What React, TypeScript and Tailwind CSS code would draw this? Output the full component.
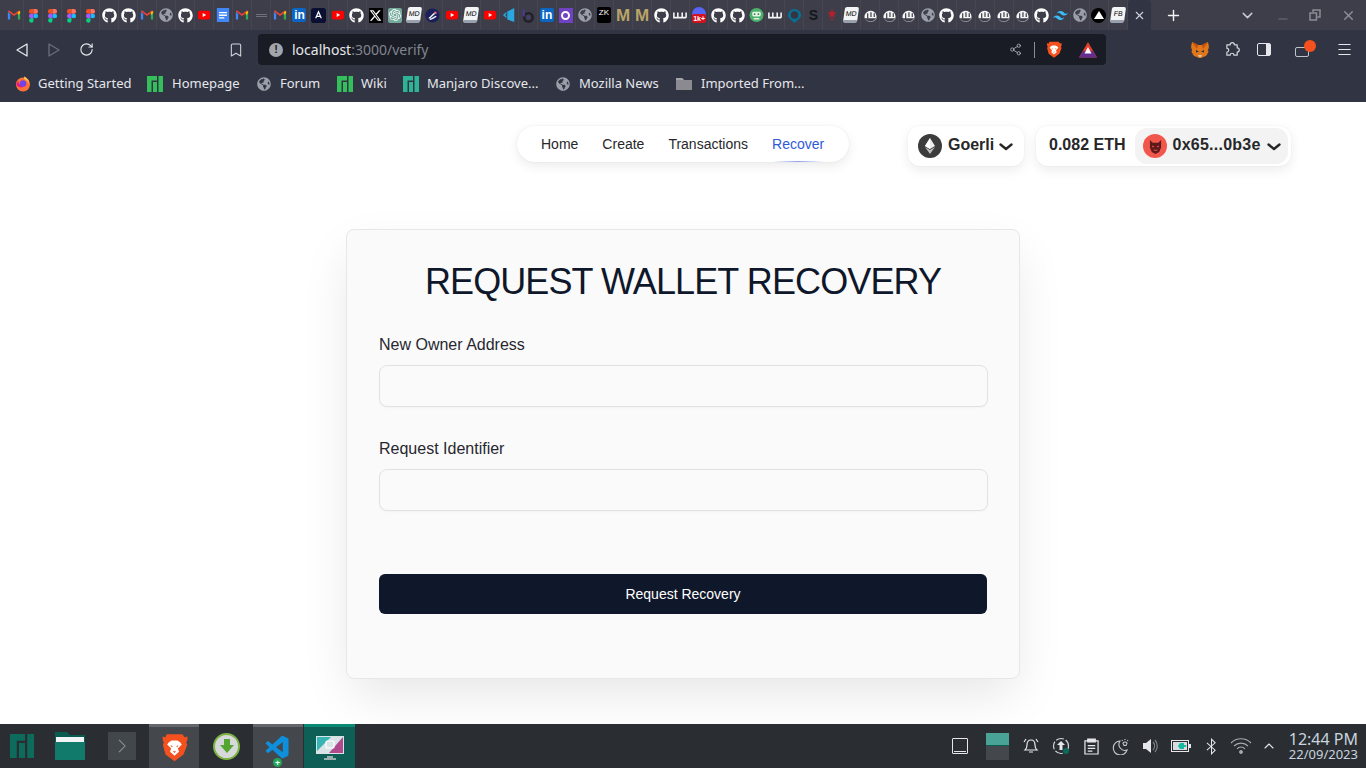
import React from "react";
import { Bookmark, ChevronDown, ChevronUp, Menu, Minus, Plus, RotateCw, Share2, X } from "lucide-react";
import { FaGithub, FaGlobeAmericas } from "react-icons/fa";
import { FaXTwitter } from "react-icons/fa6";
import { SiOpenai, SiTailwindcss } from "react-icons/si";
import { VscVscode } from "react-icons/vsc";

const UI_FONT = "font-['Noto_Sans',sans-serif]";
const PAGE_FONT = "font-['Liberation_Sans',Arial,sans-serif]";

const GmailIcon = () => (
  <svg viewBox="0 0 16 16" className="h-[14px] w-[14px]">
    <path d="M1 4v9h2.6V7z" fill="#4285f4" />
    <path d="M15 4v9h-2.6V7z" fill="#34a853" />
    <path d="M1 4l7 5.2L15 4l-1.2-1.4L8 6.8 2.2 2.6z" fill="#ea4335" />
    <path d="M12.4 4.5L15 3.5V6l-2.6 2z" fill="#fbbc04" />
  </svg>
);

const FigmaIcon = () => (
  <svg viewBox="0 0 12 16" className="h-[15px] w-[11px]">
    <path d="M6 1H3.5a2.4 2.4 0 000 5H6z" fill="#f24e1e" />
    <path d="M6 1h2.5a2.4 2.4 0 010 5H6z" fill="#ff7262" />
    <path d="M6 6H3.5a2.4 2.4 0 000 5H6z" fill="#a259ff" />
    <circle cx="8.5" cy="8.5" r="2.5" fill="#1abcfe" />
    <path d="M6 11H3.5A2.4 2.4 0 106 13.4z" fill="#0acf83" />
  </svg>
);

const YoutubeIcon = () => (
  <svg viewBox="0 0 16 16" className="h-[14px] w-[14px]">
    <rect x="1" y="3" width="14" height="10" rx="2.5" fill="#f00" />
    <path d="M6.5 5.8v4.4L10.5 8z" fill="#fff" />
  </svg>
);

const DocsIcon = () => (
  <svg viewBox="0 0 16 16" className="h-[16px] w-[14px]">
    <rect x="1" y="0" width="14" height="16" fill="#4285f4" />
    <path d="M3.5 4.5h9v1.5h-9zM3.5 7.5h9V9h-9zM3.5 10.5h6V12h-6z" fill="#fff" />
  </svg>
);

const LinkedinIcon = () => (
  <span className={`flex h-[14px] w-[14px] items-center justify-center rounded-[2px] bg-[#0a66c2] text-[12px] font-bold leading-none text-white ${PAGE_FONT}`}>in</span>
);

const MdIcon = ({ label }: { label: string }) => (
  <span className={`flex h-[16px] w-[14px] skew-x-[-8deg] items-center justify-center rounded-[2px] border-b-[3px] border-b-gray-400 bg-[#f3f4f6] text-[7px] leading-none text-black ${PAGE_FONT}`}>{label}</span>
);

const MarketIcon = () => (
  <svg viewBox="0 0 16 16" className="h-[16px] w-[15px]">
    <path d="M1.500 10.500A6.500 6.500 0 1114.500 9.500L14 11.500 2 11.500z" fill="#f5f5f5" />
    <path d="M5 6v6M8.500 5v5M12 6v4" stroke="#3d3e49" strokeWidth="1.300" fill="none" />
    <path d="M2 11.500c1.500 2 3.500 3 6 3 3 0 5.500-1.500 6.500-5L15 10c-.5 3.500-3.500 5.500-7 5.500-3 0-5-1.500-6-4z" fill="#8a8b92" />
  </svg>
);

const TinyBars = () => (
  <svg viewBox="0 0 16 16" className="h-[14px] w-[14px]">
    <path d="M1 5v6h14M5.500 5v6M10.500 5v6M15 5v6" stroke="#f3f4f6" strokeWidth="1.800" fill="none" />
  </svg>
);

const BraveIcon = ({ size }: { size: number }) => (
  <svg viewBox="0 0 24 26" width={size} height={size * 1.1}>
    <path d="M5 1h14l2 2.500 2.500-.500v3l-1 2 .8 2.500L20 19l-8 6-8-6-2.300-8.500L2.500 8l-1-2V3L4 3.500z" fill="#f4511e" />
    <path d="M7 8l2.500-1.500h5L17 8l1.500 2-3.500 3.500 1 3-4 3.500-4-3.500 1-3L5.500 10z" fill="#fff" />
    <path d="M8.500 10.500l2 1-1 1zM15.500 10.500l-2 1 1 1zM10.500 16h3l-1.500 1.500z" fill="#f4511e" />
  </svg>
);

const ManjaroGlyph = ({ color, size }: { color: string; size: number }) => (
  <svg viewBox="0 0 16 16" width={size} height={size}>
    <path d="M0 0h10v4.500H4.500V16H0zM6 6h4v10H6zM11.500 0H16v16h-4.500z" fill={color} />
  </svg>
);

const GlobeMark = ({ size }: { size: number }) => <FaGlobeAmericas size={size} color="#9a9ea8" />;

const TabIcon = ({ kind }: { kind: string }) => {
  switch (kind) {
    case "gmail": return <GmailIcon />;
    case "figma": return <FigmaIcon />;
    case "gh": return <FaGithub size={15} color="#fff" />;
    case "globe": return <GlobeMark size={14} />;
    case "yt": return <YoutubeIcon />;
    case "docs": return <DocsIcon />;
    case "dash": return <span className="h-[3px] w-[11px] border-y border-y-[#6f7078]" />;
    case "in": return <LinkedinIcon />;
    case "anchor":
      return (
        <svg viewBox="0 0 16 16" className="h-[15px] w-[15px]">
          <rect x="0" y="0" width="16" height="16" rx="3" fill="#0b1033" />
          <path d="M5 11l3-7 3 7M6.500 9h3" stroke="#fff" strokeWidth="1.300" fill="none" />
        </svg>
      );
    case "x":
      return <span className="flex h-[15px] w-[14px] items-center justify-center bg-black"><FaXTwitter size={13} color="#fff" /></span>;
    case "gpt":
      return <span className="flex h-[15px] w-[14px] items-center justify-center rounded-[2px] bg-[#74aa9c]"><SiOpenai size={12} color="#fff" /></span>;
    case "md": return <MdIcon label="MD" />;
    case "fb": return <MdIcon label="FB" />;
    case "swirl":
      return (
        <svg viewBox="0 0 16 16" className="h-[15px] w-[15px]">
          <circle cx="8" cy="8" r="7.500" fill="#1a1f5c" />
          <path d="M4 10.500C7 11 7 6 12 5M5 12c3 0 4-2 7-3" stroke="#f4f4f5" strokeWidth="1.500" fill="none" />
          <circle cx="11" cy="5" r="1.300" fill="#e85d75" />
        </svg>
      );
    case "blue":
      return (
        <svg viewBox="0 0 16 16" className="h-[16px] w-[14px]">
          <path d="M1 8l4-3.500v2L3.500 8 5 9.500v2zM6 4l8-4v16l-8-3zM7.500 6l5-2.500v2.500l-3 1 3 2v3l-5-3z" fill="#29a8e0" />
        </svg>
      );
    case "b":
      return (
        <svg viewBox="0 0 16 16" className="h-[15px] w-[15px]">
          <circle cx="9" cy="10" r="4.500" fill="none" stroke="#1f1f28" strokeWidth="2.500" />
          <path d="M4 1v8" stroke="#4a3a85" strokeWidth="2.500" />
          <circle cx="9" cy="10" r="1.500" fill="#4a3a85" />
        </svg>
      );
    case "purple":
      return (
        <span className="flex h-[15px] w-[14px] items-center justify-center bg-[#6f42c1]">
          <span className="h-[9px] w-[9px] rounded-full border-[2px] border-white" />
        </span>
      );
    case "zk":
      return <span className={`flex h-[16px] w-[14px] items-start justify-center rounded-[2px] bg-black pt-[1px] text-[8px] leading-[10px] text-white ${PAGE_FONT}`}>ZK</span>;
    case "m":
      return <span className={`text-[17px] font-bold leading-none text-[#b9a468] ${PAGE_FONT}`}>M</span>;
    case "ll": return <TinyBars />;
    case "1k":
      return (
        <span className="relative flex h-[16px] w-[14px] flex-col items-center">
          <span className="h-[8px] w-[14px] rounded-t-full bg-[#5865f2]" />
          <span className={`absolute bottom-0 flex h-[9px] w-[14px] items-center justify-center rounded-[2px] bg-[#d3121f] text-[7px] font-bold leading-none text-white ${PAGE_FONT}`}>1k+</span>
        </span>
      );
    case "robot":
      return (
        <svg viewBox="0 0 16 16" className="h-[16px] w-[15px]">
          <circle cx="8" cy="8" r="7.500" fill="#4caf6a" />
          <rect x="3.500" y="4.500" width="9" height="5" rx="1.500" fill="#e8f5e9" />
          <circle cx="6" cy="7" r="1" fill="#2e7d32" />
          <circle cx="10" cy="7" r="1" fill="#2e7d32" />
          <path d="M5 12h6" stroke="#e8f5e9" strokeWidth="1.500" />
        </svg>
      );
    case "headset":
      return (
        <svg viewBox="0 0 16 16" className="h-[15px] w-[15px]">
          <path d="M1 8a7 7 0 0114 0c0 3-4 5-7 8-3-3-7-5-7-8z" fill="#0b6c94" />
          <circle cx="8" cy="7.500" r="4" fill="#34353f" />
        </svg>
      );
    case "s":
      return <span className={`text-[14px] font-bold leading-none text-[#15161a] ${PAGE_FONT}`}>S</span>;
    case "red":
      return (
        <svg viewBox="0 0 16 16" className="h-[14px] w-[14px]">
          <path d="M8 1l1.500 3.500L13 5l-2.500 2.500L11 11 8 9.500 5 11l.5-3.500L3 5l3.500-.5zM6.500 12h3L8 15z" fill="#b3202c" />
        </svg>
      );
    case "mm": return <MarketIcon />;
    case "tw": return <SiTailwindcss size={15} color="#38bdf8" />;
    case "black":
      return (
        <span className="flex h-[15px] w-[15px] items-center justify-center rounded-full bg-black">
          <span className="h-0 w-0 border-x-[5px] border-b-[8px] border-x-transparent border-b-white" />
        </span>
      );
    default: return null;
  }
};

const TABS = [
  "gmail", "figma", "figma", "figma", "figma", "gh", "gh", "gmail", "globe", "gh",
  "yt", "docs", "gmail", "dash", "gmail", "in", "anchor", "yt", "gh", "x",
  "gpt", "md", "swirl", "yt", "md", "yt", "blue", "b", "in", "purple",
  "globe", "zk", "m", "m", "gh", "ll", "1k", "gh", "gh", "robot",
  "ll", "headset", "s", "red", "md", "mm", "mm", "mm", "globe", "gh",
  "mm", "mm", "mm", "mm", "gh", "tw", "globe", "black", "fb",
];

const TabBar = () => (
  <div className="flex h-[30px] shrink-0 items-stretch bg-[#3d3e49] pl-[5px]">
    <div className="flex w-[1123px] shrink-0">
      {TABS.map((kind, i) => (
        <div key={i} className="flex min-w-0 flex-1 items-center justify-center border-r border-r-[#45464f]">
          <TabIcon kind={kind} />
        </div>
      ))}
    </div>
    <div className="flex w-[23px] shrink-0 items-center justify-center rounded-t-[4px] bg-[#313443]">
      <X size={13} color="#d1d5db" strokeWidth={2} />
    </div>
    <div className="flex w-[44px] shrink-0 items-center justify-center">
      <Plus size={17} color="#f3f4f6" strokeWidth={2} />
    </div>
    <div className="ml-[40px] flex w-[24px] items-center justify-center">
      <ChevronDown size={17} color="#c9cbd2" strokeWidth={2} />
    </div>
    <div className="ml-[12px] flex w-[24px] items-center justify-center pt-[8px]">
      <Minus size={14} color="#6f7079" strokeWidth={2} />
    </div>
    <div className="ml-[8px] flex w-[24px] items-center justify-center">
      <svg viewBox="0 0 12 12" className="h-[12px] w-[12px]" fill="none" stroke="#8b8c94" strokeWidth="1.500">
        <path d="M4 3V1h7v7H8.500M1 4h6.500v7H1z" />
      </svg>
    </div>
    <div className="ml-[9px] flex w-[24px] items-center justify-center">
      <X size={15} color="#8b8c94" strokeWidth={2.4} />
    </div>
  </div>
);

const ToolSlot = ({ children, className = "" }: { children: React.ReactNode; className?: string }) => (
  <div className={`flex w-[32px] items-center justify-center ${className}`}>{children}</div>
);

const TriangleIcon = ({ dir, color }: { dir: "left" | "right"; color: string }) => (
  <svg viewBox="0 0 12 14" className="h-[14px] w-[12px]" fill="none" stroke={color} strokeWidth="1.300" strokeLinejoin="round">
    <path d={dir === "left" ? "M11 1v12L1 7z" : "M1 1v12l10-6z"} />
  </svg>
);

const FoxIcon = () => (
  <svg viewBox="0 0 18 16" className="h-[16px] w-[18px]">
    <path d="M1 0l6 3h4l6-3 1 5-1 3 .5 2-2.500 4-3 1-1.500 1h-3L6 15l-3-1-2.500-4L1 8 0 5z" fill="#e2761b" />
    <path d="M5 8l3 1.500-3 1zM13 8l-3 1.500 3 1z" fill="#233447" />
    <path d="M7 13h4l-1 2H8z" fill="#d7c1b3" />
    <path d="M1 0l6 3-1 4zM17 0l-6 3 1 4z" fill="#c0530f" />
  </svg>
);

const Toolbar = () => (
  <div className="flex h-[36px] shrink-0 items-stretch bg-[#313443] pb-[1px] pl-[6px] pt-[4px]">
    <ToolSlot><TriangleIcon dir="left" color="#e5e7eb" /></ToolSlot>
    <ToolSlot><TriangleIcon dir="right" color="#6b6e7a" /></ToolSlot>
    <ToolSlot><RotateCw size={15} color="#e5e7eb" strokeWidth={1.800} /></ToolSlot>
    <ToolSlot className="ml-[118px]"><Bookmark size={16} color="#d1d5db" strokeWidth={1.600} /></ToolSlot>
    <div className="ml-[6px] flex w-[848px] items-center rounded-[4px] bg-[#191c24] pl-[11px]">
      <span className={`flex h-[14px] w-[14px] items-center justify-center rounded-full bg-[#a3a5ad] text-[11px] font-bold leading-none text-[#191c24] ${PAGE_FONT}`}>!</span>
      <span className={`ml-[9px] text-[14px] text-[#e5e7eb] ${UI_FONT}`}>
        localhost<span className="text-[#82858e]">:3000/verify</span>
      </span>
      <div className="ml-auto flex items-center">
        <Share2 size={13} color="#b6b8bf" strokeWidth={1.500} />
        <span className="ml-[12px] h-[16px] w-px bg-[#8b8d95]" />
        <div className="ml-[11px]"><BraveIcon size={16} /></div>
        <svg viewBox="0 0 18 16" className="ml-[17px] mr-[9px] h-[16px] w-[18px]">
          <path d="M9 0l9 15.500H0z" fill="#e0402c" />
          <path d="M0 15.500L4 9h10l4 6.500z" fill="#662d91" />
          <path d="M9 5l3.500 6.500h-7z" fill="#fff" />
        </svg>
      </div>
    </div>
    <div className="ml-[78px] flex">
      <ToolSlot><FoxIcon /></ToolSlot>
      <ToolSlot>
        <svg viewBox="0 0 16 16" className="h-[15px] w-[15px]" fill="none" stroke="#d1d5db" strokeWidth="1.300" strokeLinejoin="round">
          <path d="M5.500 3a2.200 2.200 0 014.500 0h3v3.300a2.200 2.200 0 010 4.400V14H9.500a2 2 0 00-4 0H2v-3.300a2 2 0 000-4V3z" />
        </svg>
      </ToolSlot>
      <ToolSlot>
        <span className="flex h-[13px] w-[14px] justify-end rounded-[2px] border border-[#e5e7eb]">
          <span className="h-full w-[4px] bg-[#e5e7eb]" />
        </span>
      </ToolSlot>
      <ToolSlot className="ml-[6px]">
        <div className="relative flex h-full items-center">
          <span className="mt-[4px] h-[10px] w-[14px] rounded-[2px] border border-[#c0c2c9]" />
          <span className="absolute -right-[7px] top-[6px] h-[12px] w-[12px] rounded-full bg-[#f4511e]" />
        </div>
      </ToolSlot>
      <ToolSlot className="ml-[10px]"><Menu size={17} color="#e5e7eb" strokeWidth={1.500} /></ToolSlot>
    </div>
  </div>
);

const BookmarkItem = ({ icon, label, gap, width }: { icon: React.ReactNode; label: string; gap: string; width: string }) => (
  <div className={`flex items-center ${width} ${gap}`}>
    <span className="flex w-[16px] shrink-0 items-center justify-center">{icon}</span>
    <span className={`whitespace-nowrap text-[13px] text-[#e5e7eb] ${UI_FONT}`}>{label}</span>
  </div>
);

const FirefoxIcon = () => (
  <svg viewBox="0 0 16 16" className="h-[16px] w-[16px]">
    <circle cx="8" cy="8.500" r="7" fill="#ff7139" />
    <path d="M1.500 9a6.500 6.500 0 0011-1.500C11 12 6 11 5 8 3.500 8 3 6 4 5 2.500 5.500 1.500 7 1.500 9z" fill="#e31587" />
    <circle cx="8" cy="7.500" r="3.300" fill="#7542e5" />
    <path d="M9 .500c3 1 5.500 4 5 7.500-1-3-3-4-5-5z" fill="#ffbd4f" />
  </svg>
);

const BookmarkBar = () => (
  <div className="flex h-[36px] shrink-0 items-center bg-[#313443] pl-[15px]">
    <BookmarkItem icon={<FirefoxIcon />} label="Getting Started" gap="gap-[7px]" width="w-[132px]" />
    <BookmarkItem icon={<ManjaroGlyph color="#35bf5c" size={16} />} label="Homepage" gap="gap-[9px]" width="w-[109px]" />
    <BookmarkItem icon={<GlobeMark size={14} />} label="Forum" gap="gap-[8px]" width="w-[81px]" />
    <BookmarkItem icon={<ManjaroGlyph color="#35bf5c" size={16} />} label="Wiki" gap="gap-[8px]" width="w-[66px]" />
    <BookmarkItem icon={<ManjaroGlyph color="#2eb398" size={16} />} label="Manjaro Discove..." gap="gap-[8px]" width="w-[152px]" />
    <BookmarkItem icon={<GlobeMark size={14} />} label="Mozilla News" gap="gap-[8px]" width="w-[121px]" />
    <BookmarkItem
      icon={
        <svg viewBox="0 0 18 14" className="h-[14px] w-[18px] shrink-0">
          <path d="M1 1h6l2 2h8v10H1z" fill="#8a8a90" />
          <path d="M1 1h6l2 2H1z" fill="#a3a3a8" />
        </svg>
      }
      label="Imported From..."
      gap="gap-[9px]"
      width="w-[120px]"
    />
  </div>
);

const NavBar = () => (
  <nav className={`flex h-[36px] w-[332px] items-center gap-6 rounded-full bg-white px-6 text-sm text-[#27272a] shadow-[0_4px_12px_rgba(0,0,0,0.08),0_0_2px_rgba(0,0,0,0.08)] ${PAGE_FONT}`}>
    <a>Home</a>
    <a>Create</a>
    <a>Transactions</a>
    <a className="relative flex h-full items-center text-[#2f5bdb]">
      Recover
      <span className="absolute bottom-0 left-0 h-px w-full bg-[linear-gradient(90deg,#ffffff,#8fa3ea,#ffffff)]" />
    </a>
  </nav>
);

const WalletChevron = () => (
  <svg viewBox="0 0 14 8" className="h-[8px] w-[14px] shrink-0" fill="none" stroke="#27272a" strokeWidth="2.400" strokeLinecap="round" strokeLinejoin="round">
    <path d="M1.500 1.500L7 6l5.500-4.500" />
  </svg>
);

const EthBadge = () => (
  <span className="flex h-[24px] w-[24px] items-center justify-center rounded-full bg-[#3c3c3d]">
    <svg viewBox="0 0 10 16" className="h-[16px] w-[10px]">
      <path d="M5 0l5 8-5 3-5-3z" fill="#ececec" />
      <path d="M5 12l5-3-5 7-5-7z" fill="#bdbdbd" />
      <path d="M5 0v11L0 8z" fill="#fff" />
    </svg>
  </span>
);

const Avatar = () => (
  <span className="flex h-[24px] w-[24px] items-center justify-center rounded-full bg-[#f2574d]">
    <svg viewBox="0 0 14 16" className="h-[15px] w-[13px]">
      <path d="M1 1l3 3h6l3-3v8l-2 5-4 2-4-2-2-5z" fill="#5d1a1a" />
      <path d="M3 7l3 1-2 1zM11 7L8 8l2 1z" fill="#f2574d" />
      <path d="M5 12h4" stroke="#f2574d" strokeWidth="1" />
    </svg>
  </span>
);

const WalletHeader = () => (
  <header className={`flex shrink-0 items-start pl-[517px] pt-[24px] text-[#27272a] ${PAGE_FONT}`}>
    <NavBar />
    <div className="ml-[59px] flex h-[40px] w-[116px] items-center rounded-xl bg-white pl-[10px] shadow-[0_4px_12px_rgba(0,0,0,0.08),0_0_2px_rgba(0,0,0,0.06)]">
      <EthBadge />
      <span className="mb-[2px] ml-[6px] text-base font-bold">Goerli</span>
      <div className="ml-[5px] mt-[1px]"><WalletChevron /></div>
    </div>
    <div className="ml-[12px] flex h-[40px] w-[255px] items-center rounded-xl bg-white pl-[13px] shadow-[0_4px_12px_rgba(0,0,0,0.08),0_0_2px_rgba(0,0,0,0.06)]">
      <span className="mb-[2px] text-base font-bold">0.082 ETH</span>
      <div className="ml-[10px] flex h-[36px] w-[153px] items-center rounded-xl bg-[#f3f3f3] pl-[8px]">
        <Avatar />
        <span className="mb-[2px] ml-[5px] text-base font-bold tracking-[0.25px]">0x65...0b3e</span>
        <div className="ml-[6px] mt-[1px]"><WalletChevron /></div>
      </div>
    </div>
  </header>
);

const FormField = ({ label, className }: { label: string; className: string }) => (
  <div className={className}>
    <label className="block text-base leading-6 text-[#27272f]">{label}</label>
    <input className="mt-[8px] block h-[42px] w-[609px] rounded-lg border border-[#e2e2e4] bg-[#fafafa] shadow-[0_1px_2px_rgba(0,0,0,0.03)]" type="text" />
  </div>
);

const RecoveryCard = () => (
  <main className={`flex justify-center pt-[63px] ${PAGE_FONT}`}>
    <div className="h-[450px] w-[674px] rounded-lg border border-[#e5e7eb] bg-[#fafafa] px-8 pt-8 shadow-[0_20px_50px_-5px_rgba(0,0,0,0.1)]">
      <h1 className="text-center text-4xl tracking-tight text-[#0f172a]">REQUEST WALLET RECOVERY</h1>
      <FormField label="New Owner Address" className="mt-[31px]" />
      <FormField label="Request Identifier" className="mt-[30px]" />
      <button className="mt-[63px] block h-[40px] w-[608px] rounded-md bg-[#0f172a] text-sm text-white">Request Recovery</button>
    </div>
  </main>
);

const TaskTile = ({ children, className }: { children: React.ReactNode; className: string }) => (
  <div className={`flex h-full items-center justify-center border-t-[3px] ${className}`}>{children}</div>
);

const TrayIcon = ({ children }: { children: React.ReactNode }) => (
  <div className="flex w-[30px] items-center justify-center">{children}</div>
);

const Taskbar = () => (
  <div className={`flex h-[44px] shrink-0 items-center bg-[#2a2e32] ${UI_FONT}`}>
    <div className="ml-[10px] flex h-full items-center">
      <ManjaroGlyph color="#0c6b5b" size={24} />
    </div>
    <div className="ml-[21px] flex h-full items-center">
      <svg viewBox="0 0 30 28" className="h-[28px] w-[30px]">
        <path d="M0 0h12l3 3h15v25H0z" fill="#0a5c50" />
        <rect x="1" y="5" width="28" height="5" fill="#f3f4f6" />
        <path d="M0 10h30v18H0z" fill="#127a6a" />
      </svg>
    </div>
    <div className="ml-[23px] flex h-full items-center">
      <span className="flex h-[28px] w-[28px] items-center justify-center bg-[#42474b]">
        <svg viewBox="0 0 10 16" className="h-[14px] w-[9px]" fill="none" stroke="#8f9497" strokeWidth="1.200"><path d="M1 1l7 7-7 7" /></svg>
      </span>
    </div>
    <TaskTile className="ml-[13px] w-[50px] border-t-[#63676b] bg-[#44484d]"><BraveIcon size={27} /></TaskTile>
    <div className="ml-[14px] flex h-full items-center">
      <span className="flex h-[27px] w-[27px] items-center justify-center rounded-full border-[2px] border-[#7cb342] bg-[#d6d8da]">
        <svg viewBox="0 0 14 14" className="h-[14px] w-[14px]"><path d="M4 0h6v6h4l-7 8-7-8h4z" fill="#55a630" /></svg>
      </span>
    </div>
    <TaskTile className="relative ml-[13px] w-[50px] border-t-[#63676b] bg-[#44484d]">
      <VscVscode size={28} color="#0e8fdc" />
      <span className="absolute bottom-[1px] left-[20px] flex h-[9px] w-[9px] items-center justify-center rounded-full bg-[#22a559] text-[9px] font-bold leading-none text-white">+</span>
    </TaskTile>
    <TaskTile className="ml-[1px] w-[51px] border-t-[#0a8a74] bg-[#0e5f56]">
      <svg viewBox="0 0 30 26" className="h-[26px] w-[30px]">
        <rect x="1" y="1" width="28" height="18" fill="#d8e4e6" />
        <path d="M2 2h14L2 16z" fill="#37b5b5" />
        <path d="M28 2v16H14z" fill="#b04a8c" />
        <rect x="11" y="6" width="8" height="7" rx="1" fill="none" stroke="#fff" strokeWidth="1.200" />
        <path d="M12 22h6M9 24h12" stroke="#c4ccce" strokeWidth="1.500" />
      </svg>
    </TaskTile>
    <div className="ml-auto flex h-full items-center">
      <span className="flex h-[16px] w-[16px] items-end rounded-[1px] border border-[#e5e7eb] p-[1px]"><span className="h-px w-full bg-[#e5e7eb]" /></span>
      <div className="ml-[18px] flex h-[27px] w-[23px] flex-col">
        <span className="h-[13px] border-b border-b-[#0d5c50] bg-[#4aa397]" />
        <span className="h-[14px] bg-[#44484d]" />
      </div>
      <div className="ml-[7px] flex">
        <TrayIcon>
          <svg viewBox="0 0 18 18" className="h-[18px] w-[18px]" fill="none" stroke="#e5e7eb" strokeWidth="1.200">
            <path d="M9 3c-3 0-4 2-4 5 0 3-1 4-2 5h12c-1-1-2-2-2-5 0-3-1-5-4-5zM7 15h4M2 5l2-3M16 5l-2-3" />
          </svg>
        </TrayIcon>
        <TrayIcon>
          <svg viewBox="0 0 18 18" className="h-[18px] w-[18px]">
            <circle cx="9" cy="9" r="7.500" fill="none" stroke="#d1d5db" strokeWidth="1.200" strokeDasharray="8 2" />
            <path d="M9 4l4 4h-2.500v5h-3V8H5z" fill="#e5e7eb" />
            <circle cx="14" cy="14" r="3" fill="#0c6b5b" />
          </svg>
        </TrayIcon>
        <TrayIcon>
          <svg viewBox="0 0 16 18" className="h-[17px] w-[15px]" fill="none" stroke="#e5e7eb" strokeWidth="1.300">
            <path d="M1 3h14v14H1zM4 8h8M4 11h8M4 14h5" />
            <path d="M4 1h8v3H4z" fill="#e5e7eb" />
          </svg>
        </TrayIcon>
        <TrayIcon>
          <svg viewBox="0 0 18 18" className="h-[18px] w-[18px]" fill="none" stroke="#c9ccd0" strokeWidth="1.100">
            <path d="M8 4a7 7 0 107 9 6 6 0 01-7-9zM13 2v1M10 3l.6.8M16 3l-.6.8M11 6a2.500 2.500 0 014 0c0 1-1 1.500-1 2.500h-2c0-1-1-1.500-1-2.500z" />
          </svg>
        </TrayIcon>
        <TrayIcon>
          <svg viewBox="0 0 18 18" className="h-[18px] w-[18px]">
            <path d="M1 6h3l5-4v14l-5-4H1z" fill="#e5e7eb" />
            <path d="M11 5a6 6 0 010 8M13 3a9 9 0 010 12" fill="none" stroke="#7d8186" strokeWidth="1.200" />
          </svg>
        </TrayIcon>
        <TrayIcon>
          <svg viewBox="0 0 20 12" className="h-[12px] w-[20px]">
            <rect x="0.500" y="0.500" width="17" height="11" fill="#2a2e32" stroke="#e5e7eb" />
            <rect x="2" y="2" width="14" height="8" fill="#d9dcde" />
            <path d="M13 3v2h2v2h-2v2H9L7 6l2-3z" fill="#17b8a0" />
            <rect x="18" y="4" width="2" height="4" fill="#e5e7eb" />
          </svg>
        </TrayIcon>
        <TrayIcon>
          <svg viewBox="0 0 12 18" className="h-[17px] w-[11px]" fill="none" stroke="#e5e7eb" strokeWidth="1.100"><path d="M1 5l9 8-4 4V1l4 4-9 8" /></svg>
        </TrayIcon>
        <TrayIcon>
          <svg viewBox="0 0 22 16" className="h-[16px] w-[22px]" fill="none" stroke="#a8abb0" strokeWidth="1.100">
            <path d="M1 5a14 14 0 0120 0M4 8a10 10 0 0114 0M7 11a5 5 0 018 0" />
            <circle cx="11" cy="14" r="1.200" stroke="#e5e7eb" />
          </svg>
        </TrayIcon>
      </div>
      <ChevronUp size={16} color="#e5e7eb" strokeWidth={1.600} className="ml-[5px]" />
      <div className="ml-[12px] mr-[8px] flex w-[69px] flex-col items-end text-[#c9d4df]">
        <span className="whitespace-nowrap text-[16px] leading-[15px]">12:44 PM</span>
        <span className="mt-[1px] whitespace-nowrap text-[13px] leading-[13px]">22/09/2023</span>
      </div>
    </div>
  </div>
);

export default function App() {
  return (
    <div className="flex h-[768px] w-[1366px] flex-col overflow-hidden bg-white">
      <TabBar />
      <Toolbar />
      <BookmarkBar />
      <div className="min-h-0 flex-1 overflow-hidden">
        <WalletHeader />
        <RecoveryCard />
      </div>
      <Taskbar />
    </div>
  );
}
